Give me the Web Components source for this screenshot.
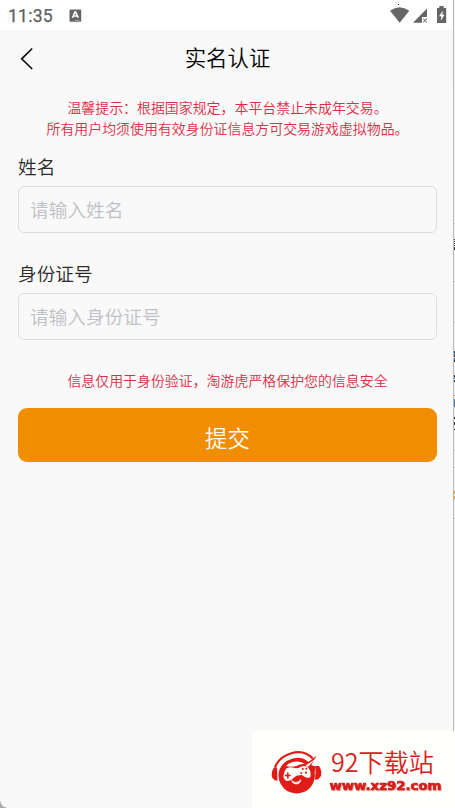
<!DOCTYPE html>
<html lang="zh-CN">
<head>
<meta charset="utf-8">
<title>实名认证</title>
<style>
html,body{margin:0;height:100%;overflow:hidden;background:#f9f9f9}
body{font-family:"Noto Sans CJK SC",sans-serif;font-weight:350}
</style>
</head>
<body>
<identity-page></identity-page>
<script>
const define=(name,html)=>customElements.define(name,class extends HTMLElement{
  constructor(){super();const t=document.createElement('template');t.innerHTML=html;
    this.attachShadow({mode:'open'}).append(t.content.cloneNode(true));}
});

define('status-bar',`<style>
:host{display:flex;height:30px;background:#fff;box-sizing:border-box;padding:0 8px 0 8px;align-items:center;justify-content:space-between;color:#606060}
.l,.r{display:flex;align-items:center}
.t{font:400 17.6px/20px Roboto,sans-serif;letter-spacing:.2px;padding-top:2px;width:61px;-webkit-text-stroke:.25px #606060}
svg{display:block}
</style>
<div class="l"><span class="t">11:35</span>
<svg width="13" height="13" viewBox="0 0 13 13"><rect x=".5" y=".5" width="11.7" height="12.3" rx="1" fill="#666"/><path d="M3.5 8.8 5.9 3h.8L9.2 8.8M4.6 7h3.6" fill="none" stroke="#fff" stroke-width="1.6"/><path d="M6 11.5h5" stroke="#bbb" stroke-dasharray="1 .6"/></svg></div>
<svg class="r" width="58" height="24" viewBox="389 3 58 24"><path d="M390 10.7Q399.5 3.6 409.3 10.7L399.7 22.7Z" fill="#666"/><rect x="398" y="4" width="1" height="1" fill="#111"/><path d="M427 8.5V17h-5v5.7h-9Z" fill="#666"/><path d="m423.2 18.5 3.6 4m0-4-3.6 4" stroke="#777" stroke-width="1.1"/><path d="M439.3 6h4.4v2h2.5v15h-9.2V8h2.3Z" fill="#666"/><path d="m442.8 10.7-3.8 5.5h2.4l-.7 4.5 3.8-6h-2.2Z" fill="#fff"/></svg>`);

define('nav-header',`<style>
:host{display:grid;grid-template-columns:50px 1fr 50px;height:56px;align-items:center;background:#f8f8f8;color:#111}
h1{margin:0;padding-bottom:2px;font-weight:inherit;font-size:21.4px;line-height:30px;text-align:center;color:#000}
svg{display:block;margin-left:19px}
</style>
<svg width="16" height="24" viewBox="0 0 16 24"><path d="M13.2 2.5 2.7 12.8 13.2 23" fill="none" stroke="#111" stroke-width="1.7"/></svg>
<h1><slot></slot></h1>`);

define('red-notice',`<style>
:host{display:block;text-align:center;font-size:13.93px;line-height:21px;color:#df2c46;white-space:nowrap}
</style><slot></slot>`);

define('form-field',`<style>
:host{display:block}
.label{font-size:18.67px;line-height:28px;color:#2c2c2c}
.box{height:47px;box-sizing:border-box;border:1px solid #dcdee1;border-radius:6px;padding:0 11px 1px;margin-top:6px;display:flex;align-items:center;font-size:18.67px;line-height:28px;color:#bdc1c6}
</style>
<div class="label"><slot name="label"></slot></div><div class="box"><slot></slot></div>`);

define('submit-button',`<style>
:host{display:flex;height:53.5px;border-radius:9px;background:#f18e00;color:#fff;align-items:center;justify-content:center;font-size:22.4px;line-height:32px}
span{padding-top:5px}
</style><span><slot></slot></span>`);

define('site-mark',`<style>
:host{display:block;background:#fffffb;border-radius:5px 0 0 0}
svg{display:block}
</style>
<svg width="203" height="77" viewBox="252 731 203 77">
<g fill="#e11b18">
<path d="M277 767.5h-3q-3 4-2 10l3 3h2.5ZM316 766h3q3 4 2 10l-3 3.5h-3Z"/>
<circle cx="296.7" cy="775.3" r="18.2"/>
</g>
<path d="M275 767.5C280 754 301 746 312.7 758.5" fill="none" stroke="#e11b18" stroke-width="2.2"/>
<path d="M278 769C284 756.5 300 752.5 309.5 761" fill="none" stroke="#fffffb" stroke-width="2.6"/>
<path d="m304.5 765 12-9.3-5.3 9.5 4.8 1-1 6-4-5Z" fill="#e11b18"/>
<path d="m305.5 765.5 10-6.5-7.5 8Z" fill="#fffffb"/>
<path d="M286.2 768.5Q290 766.3 293.5 767.8 297 769 301 766.7 307 764.5 310 770.5 312 777 308.5 778 305 778 302 775 296 775 293.5 778 289.5 782.5 285.5 780.5 281 777 286.2 768.5Z" fill="#fffffb"/>
<path d="M289 763.5Q297 759.5 305 764 300 763.5 296.5 766 292 767.5 286 766Z" fill="#fffffb"/>
<path d="M287.8 772.5v6m-3-3h6" stroke="#e11b18" stroke-width="1.6"/>
<g fill="#e11b18"><circle cx="302.7" cy="769" r="1.1"/><circle cx="306" cy="772.6" r="1.1"/><circle cx="301.2" cy="772.9" r="1"/><circle cx="306.4" cy="768.8" r="1"/></g>
<path d="M291.5 780.5Q296.5 784.7 301 779.7 300 784 296 784 293 784 291.5 780.5Z" fill="#fffffb" stroke="#fffffb" stroke-width=".7"/>
<text x="331" y="772" textLength="103" lengthAdjust="spacingAndGlyphs" font-family="Noto Sans CJK SC,sans-serif" font-size="25" fill="#d9201c">92下载站</text>
<g font-family="DejaVu Sans,sans-serif" font-weight="700" font-size="12.5">
<text x="329.5" y="790" textLength="112" lengthAdjust="spacingAndGlyphs" fill="#d51e1b" stroke="#d51e1b" stroke-width=".7" stroke-linejoin="round" style="filter:drop-shadow(1px 1px .5px #d8bcb4)">www.xz92.com</text></g>
</svg>`);

define('page-edge',`<style>:host{display:block}svg{display:block}</style>
<svg width="3" height="731" viewBox="0 0 3 731">
<path d="M2 0h1v731H2Z" fill="#f5f5f5"/><path d="M1 0h1v731H1Z" fill="#b8b8b8"/>
<path d="M2 223h1v1H2m0 25h1v1H2m0 31h1v1H2m0 40h1v1H2m0 127h1v1H2m0 16h1v1H2m0 50h1v1H2" fill="#ccc"/>
<path d="M2 239h1v1H2ZM2 241h1v1H2ZM2 243h1v1H2ZM2 245h1v1H2ZM2 247h1v3H2ZM2 351h1v2H2ZM2 355h1v2H2ZM2 360h1v2H2ZM2 375h1v2H2ZM2 380h1v2H2ZM2 417h1v2H2ZM2 422h1v3H2ZM2 429h1v1H2Z" fill="#333"/>
<path d="M2 353h1v2H2ZM2 358h1v2H2ZM2 377h1v2H2ZM2 399h1v8H2Z" fill="#5279a8"/>
<path d="M2 395h1v1H2ZM2 491h1v3H2ZM2 496h1v3H2Z" fill="#d2a22e"/>
</svg>`);

define('identity-page',`<style>
:host{display:flex;flex-direction:column;position:relative;height:808px;width:455px;background:#f9f9f9;overflow:hidden}
main{display:flex;flex-direction:column;padding:11px 18px 0}
red-notice.a{margin-bottom:13px}
form-field+form-field{margin-top:26px}
red-notice.b{margin:30px 0 17px}
page-edge{position:absolute;right:0;top:0}
site-mark{position:absolute;right:0;bottom:0}
.corner{position:absolute;left:0;bottom:0;width:7px;height:7px;background:radial-gradient(circle at 100% 0,transparent 6px,#aaa 7px)}
</style>
<status-bar></status-bar><nav-header>实名认证</nav-header>
<main>
<red-notice class="a">温馨提示：根据国家规定，本平台禁止未成年交易。<br>所有用户均须使用有效身份证信息方可交易游戏虚拟物品。</red-notice>
<form-field><span slot="label">姓名</span>请输入姓名</form-field>
<form-field><span slot="label">身份证号</span>请输入身份证号</form-field>
<red-notice class="b">信息仅用于身份验证，淘游虎严格保护您的信息安全</red-notice>
<submit-button>提交</submit-button>
</main>
<page-edge></page-edge><div class="corner"></div><site-mark></site-mark>`);
</script>
</body>
</html>
